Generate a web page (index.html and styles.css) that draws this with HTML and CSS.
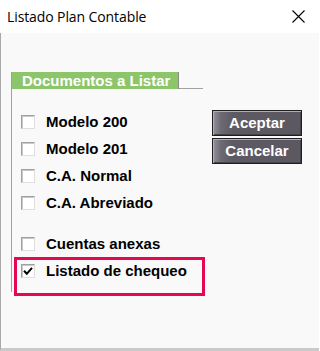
FILE: index.html
```html
<!DOCTYPE html>
<html lang="es">
<head>
<meta charset="utf-8">
<title>Listado Plan Contable</title>
<link rel="stylesheet" href="styles.css">
</head>
<body>
<div class="window">
  <div class="titlebar">
    <span class="title">Listado Plan Contable</span>
    <span class="close" aria-label="Cerrar">
      <svg width="13" height="13" viewBox="0 0 13 13"><path d="M0.5 0.5 L12.5 12.5 M12.5 0.5 L0.5 12.5" stroke="#000" stroke-width="1.1" fill="none"/></svg>
    </span>
  </div>
  <div class="content">
    <div class="group">
      <div class="group-head">
        <div class="tab">Documentos a Listar</div>
        <div class="rule"></div>
      </div>
      <div class="group-body">
        <div class="list">
          <label class="row"><span class="box"></span><span class="text">Modelo 200</span></label>
          <label class="row"><span class="box"></span><span class="text">Modelo 201</span></label>
          <label class="row"><span class="box"></span><span class="text">C.A. Normal</span></label>
          <label class="row"><span class="box"></span><span class="text">C.A. Abreviado</span></label>
          <div class="spacer"></div>
          <label class="row"><span class="box"></span><span class="text">Cuentas anexas</span></label>
          <label class="row highlighted"><span class="box"><svg width="10" height="10" viewBox="0 0 10 10"><path d="M1 4.8 L3.8 7.8 L9 1.8" stroke="#000" stroke-width="2" fill="none"/></svg></span><span class="text">Listado de chequeo</span></label>
        </div>
        <div class="buttons">
          <button class="btn">Aceptar</button>
          <button class="btn">Cancelar</button>
        </div>
      </div>
    </div>
  </div>
</div>
</body>
</html>
```
FILE: styles.css
```css
html, body {
  margin: 0;
  padding: 0;
}
body {
  width: 319px;
  height: 351px;
  overflow: hidden;
  background: #ffffff;
}
.window {
  width: 319px;
  height: 351px;
  display: flex;
  flex-direction: column;
}
.titlebar {
  height: 33px;
  flex: none;
  background: #ffffff;
  display: flex;
  align-items: center;
  justify-content: space-between;
  padding: 0 14px 0 7px;
  box-sizing: border-box;
}
.title {
  font-family: "Open Sans", "Noto Sans", sans-serif;
  font-size: 14px;
  color: #000;
  letter-spacing: -0.1px;
}
.close {
  display: flex;
  width: 13px;
  height: 13px;
}
.content {
  flex: 1;
  background: #f9f9f9;
  border-left: 1px solid #a8a8a8;
  border-bottom: 3px solid #cacaca;
  padding: 39px 17px 0 10px;
  box-sizing: border-box;
}
.group {
  border-left: 1px solid #a0a0a0;
  padding-bottom: 8px;
}
.group-head {
  display: flex;
  align-items: flex-end;
}
.tab {
  width: 166px;
  height: 17px;
  background: #8dc56b;
  border-right: 1px solid #8a8a8a;
  color: #ffffff;
  font-family: "Liberation Sans", Arial, sans-serif;
  font-weight: bold;
  font-size: 15px;
  line-height: 17px;
  padding-left: 10px;
  box-sizing: border-box;
  width: 167px;
  white-space: nowrap;
}
.rule {
  width: 24px;
  border-bottom: 1px solid #a0a0a0;
}
.group-body {
  display: flex;
  justify-content: space-between;
  align-items: flex-start;
  padding-top: 19px;
}
.list {
  display: flex;
  flex-direction: column;
  padding-left: 9px;
}
.row {
  height: 27px;
  display: flex;
  align-items: center;
  gap: 11px;
  font-family: "Liberation Sans", Arial, sans-serif;
  font-weight: bold;
  font-size: 15px;
  color: #000;
  white-space: nowrap;
}
.box {
  width: 14px;
  height: 14px;
  box-sizing: border-box;
  background: #ffffff;
  border: 1px solid;
  border-color: #a0a0a0 #dedede #dedede #a0a0a0;
  box-shadow: inset 1px 1px 0 #c9c9c9;
  display: flex;
  align-items: center;
  justify-content: center;
  flex: none;
}
.spacer {
  height: 14px;
}
.highlighted {
  position: relative;
}
.highlighted::after {
  content: "";
  position: absolute;
  left: -7px;
  top: 0;
  width: 191px;
  height: 39px;
  box-sizing: border-box;
  border: 3px solid #e5074f;
}
.buttons {
  display: flex;
  flex-direction: column;
  gap: 2px;
  margin-top: 2px;
}
.btn {
  width: 90px;
  height: 26px;
  margin: 0;
  padding: 0;
  border: 1px solid #1f1f22;
  background: linear-gradient(to right, #94919b 0px, #6c6973 8px, #5d5a64 20px, #5b5862 100%);
  box-shadow: inset 1px 1px 0 #b0adb5, inset -1px -1px 0 #46444b;
  color: #ffffff;
  font-family: "Liberation Sans", Arial, sans-serif;
  font-weight: bold;
  font-size: 15px;
  line-height: 24px;
  text-align: center;
  cursor: pointer;
}
```
